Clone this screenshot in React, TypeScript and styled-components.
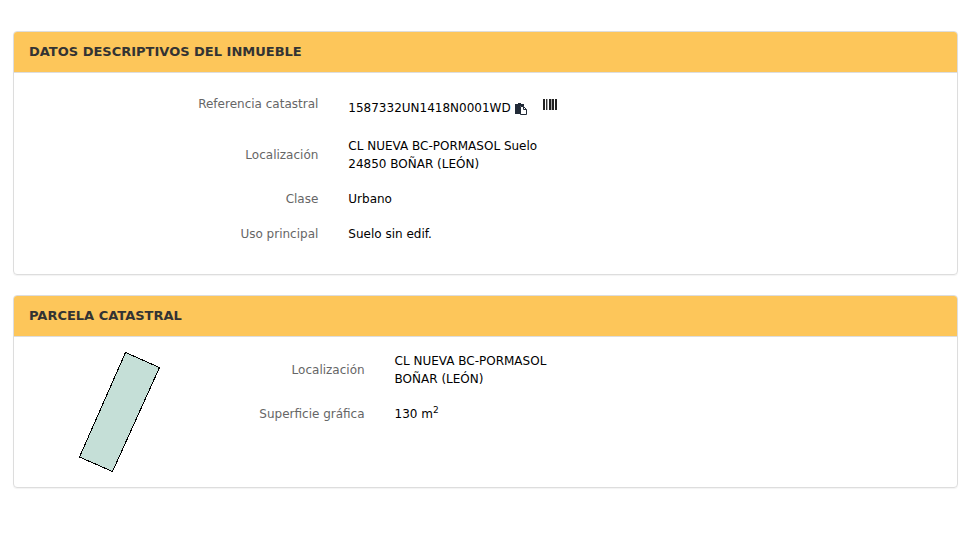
import React from 'react';
import styled, { createGlobalStyle } from 'styled-components';

const Global = createGlobalStyle`
  * { box-sizing: border-box; }
  body {
    margin: 0;
    background: #fff;
    color: #000;
    font: 12px/18px Verdana, "DejaVu Sans", sans-serif;
  }
`;

const Page = styled.main`
  padding: 31px 19px 20px 13px;
  display: flex;
  flex-direction: column;
  gap: 20px;
`;

const Panel = styled.section`
  border: 1px solid #ddd;
  border-radius: 4px;
  box-shadow: 0 1px 1px rgba(0, 0, 0, 0.05);
  overflow: hidden;
`;

const Heading = styled.h2`
  margin: 0;
  padding: 11px 15px;
  background: #fdc65a;
  border-bottom: 1px solid #ddd;
  color: #333;
  font-size: 13px;
  font-weight: bold;
  line-height: 18px;
`;

const Body = styled.div<{ $bottom: number }>`
  display: flex;
  align-items: flex-start;
  padding: 15px 15px ${(p) => p.$bottom}px;
`;

const List = styled.dl<{ $columns: string }>`
  flex: 1;
  margin: 0;
  display: grid;
  grid-template-columns: ${(p) => p.$columns};
  row-gap: 17px;
  align-items: center;
`;

const Term = styled.dt`
  padding-right: 15px;
  color: #666;
  text-align: right;
`;

const Value = styled.dd`
  margin: 0;
  padding-left: 15px;
`;

const ReferenceTerm = styled(Term)`
  padding-top: 7px;
  padding-bottom: 7px;
`;

const ReferenceValue = styled(Value)`
  display: flex;
  align-items: flex-start;
  padding-top: 8px;
`;

const IconButton = styled.button<{ $gap: number; $top: number }>`
  display: flex;
  margin: 0 0 0 ${(p) => p.$gap}px;
  padding: ${(p) => p.$top}px 0 0;
  border: 0;
  background: none;
  cursor: pointer;
`;

const Superscript = styled.sup`
  font-size: 9px;
  line-height: 0;
  vertical-align: 5px;
`;

const MapLink = styled.a`
  flex: 0 0 20%;
  display: flex;
  justify-content: center;
`;

const CopyIcon = () => (
  <svg width="12" height="12" viewBox="0 0 12 12" aria-hidden="true">
    <path d="M0 1h3V0h3v1h3v2H5v8H0z" fill="#222b38" />
    <path d="M5.5 3.5h3l3 3v5h-6z" fill="#fff" stroke="#222b38" />
    <path d="M8.5 3.5v3h3" fill="none" stroke="#222b38" />
  </svg>
);

const BarcodeIcon = () => (
  <svg width="14" height="11" viewBox="0 0 14 11" shapeRendering="crispEdges" aria-hidden="true">
    <path d="M0 0h2v11H0zM6 0h2v11H6zM9 0h2v11H9zM12 0h2v11h-2z" fill="#222" />
    <path d="M3 0h1v11H3z" fill="#333" />
    <path d="M4 0h1v11H4zM8 0h1v11H8z" fill="#aaa" />
  </svg>
);

const ParcelShape = () => (
  <svg width="82" height="121" viewBox="0 0 82 121" role="img" aria-label="Parcela">
    <path
      d="M46.5 .5L80.5 15.5 33.5 119.5 .5 105z"
      fill="#c5dfd7"
      stroke="#000"
      shapeRendering="crispEdges"
    />
  </svg>
);

export default function App() {
  return (
    <>
      <Global />
      <Page>
        <Panel>
          <Heading>DATOS DESCRIPTIVOS DEL INMUEBLE</Heading>
          <Body $bottom={31}>
            <List $columns="1fr 2fr">
              <ReferenceTerm>Referencia catastral</ReferenceTerm>
              <ReferenceValue>
                1587332UN1418N0001WD
                <IconButton type="button" $gap={4} $top={4} aria-label="Copiar">
                  <CopyIcon />
                </IconButton>
                <IconButton type="button" $gap={16} $top={0} aria-label="Código de barras">
                  <BarcodeIcon />
                </IconButton>
              </ReferenceValue>
              <Term>Localización</Term>
              <Value>
                CL NUEVA BC-PORMASOL Suelo
                <br />
                24850 BOÑAR (LEÓN)
              </Value>
              <Term>Clase</Term>
              <Value>Urbano</Value>
              <Term>Uso principal</Term>
              <Value>Suelo sin edif.</Value>
            </List>
          </Body>
        </Panel>
        <Panel>
          <Heading>PARCELA CATASTRAL</Heading>
          <Body $bottom={14}>
            <MapLink href="#parcela">
              <ParcelShape />
            </MapLink>
            <List $columns="23fr 77fr">
              <Term>Localización</Term>
              <Value>
                CL NUEVA BC-PORMASOL
                <br />
                BOÑAR (LEÓN)
              </Value>
              <Term>Superficie gráfica</Term>
              <Value>
                130 m<Superscript>2</Superscript>
              </Value>
            </List>
          </Body>
        </Panel>
      </Page>
    </>
  );
}
